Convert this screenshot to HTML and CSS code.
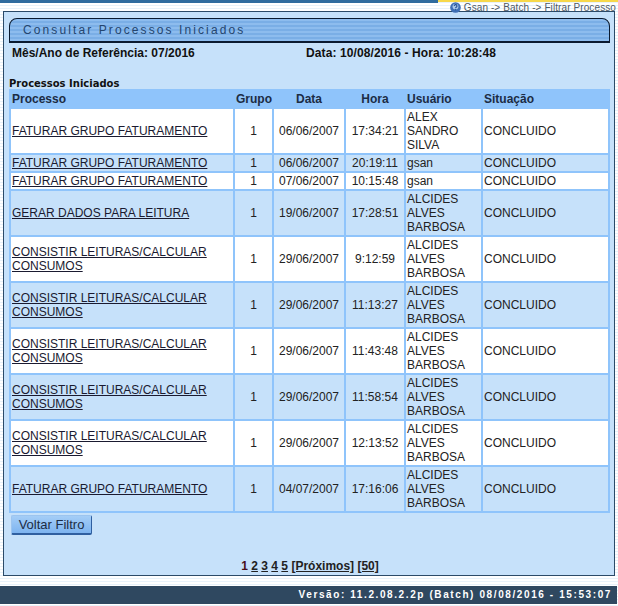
FILE: index.html
```html
<!DOCTYPE html>
<html lang="pt">
<head>
<meta charset="utf-8">
<title>Consultar Processos Iniciados</title>
<link rel="stylesheet" href="styles.css">
</head>
<body>
<div class="topbar"><div class="topbar-blue"></div><div class="topbar-yellow"></div></div>
<div class="crumb">
  <svg class="crumb-icon" width="11" height="11" viewBox="0 0 12 12"><circle cx="6" cy="6" r="5.8" fill="#3f6fb5"/><circle cx="6" cy="5" r="3.2" fill="#a9c8ea"/><path d="M4.6 4.4a1.5 1.5 0 1 1 2.2 1.3c-.5.3-.8.5-.8 1.1" fill="none" stroke="#234f94" stroke-width="1.2"/><rect x="5.4" y="7.8" width="1.2" height="1.2" fill="#234f94"/></svg>
  <span>Gsan -&gt; Batch -&gt; Filtrar Processo</span>
</div>
<main class="panel">
  <h1 class="title">Consultar Processos Iniciados</h1>
  <div class="info">
    <span class="info-ref">Mês/Ano de Referência: 07/2016</span>
    <span class="info-date">Data: 10/08/2016 - Hora: 10:28:48</span>
  </div>
  <div class="caption">Processos Iniciados</div>
  <table class="grid">
    <colgroup><col class="c1"><col class="c2"><col class="c3"><col class="c4"><col class="c5"><col class="c6"></colgroup>
    <thead><tr><th class="l">Processo</th><th>Grupo</th><th>Data</th><th>Hora</th><th class="l">Usuário</th><th class="l">Situação</th></tr></thead>
    <tbody>
      <tr><td><a href="#">FATURAR GRUPO FATURAMENTO</a></td><td class="m">1</td><td class="m">06/06/2007</td><td class="m">17:34:21</td><td>ALEX SANDRO SILVA</td><td>CONCLUIDO</td></tr>
      <tr class="alt"><td><a href="#">FATURAR GRUPO FATURAMENTO</a></td><td class="m">1</td><td class="m">06/06/2007</td><td class="m">20:19:11</td><td>gsan</td><td>CONCLUIDO</td></tr>
      <tr><td><a href="#">FATURAR GRUPO FATURAMENTO</a></td><td class="m">1</td><td class="m">07/06/2007</td><td class="m">10:15:48</td><td>gsan</td><td>CONCLUIDO</td></tr>
      <tr class="alt"><td><a href="#">GERAR DADOS PARA LEITURA</a></td><td class="m">1</td><td class="m">19/06/2007</td><td class="m">17:28:51</td><td>ALCIDES ALVES BARBOSA</td><td>CONCLUIDO</td></tr>
      <tr><td><a href="#">CONSISTIR LEITURAS/CALCULAR CONSUMOS</a></td><td class="m">1</td><td class="m">29/06/2007</td><td class="m">9:12:59</td><td>ALCIDES ALVES BARBOSA</td><td>CONCLUIDO</td></tr>
      <tr class="alt"><td><a href="#">CONSISTIR LEITURAS/CALCULAR CONSUMOS</a></td><td class="m">1</td><td class="m">29/06/2007</td><td class="m">11:13:27</td><td>ALCIDES ALVES BARBOSA</td><td>CONCLUIDO</td></tr>
      <tr><td><a href="#">CONSISTIR LEITURAS/CALCULAR CONSUMOS</a></td><td class="m">1</td><td class="m">29/06/2007</td><td class="m">11:43:48</td><td>ALCIDES ALVES BARBOSA</td><td>CONCLUIDO</td></tr>
      <tr class="alt"><td><a href="#">CONSISTIR LEITURAS/CALCULAR CONSUMOS</a></td><td class="m">1</td><td class="m">29/06/2007</td><td class="m">11:58:54</td><td>ALCIDES ALVES BARBOSA</td><td>CONCLUIDO</td></tr>
      <tr><td><a href="#">CONSISTIR LEITURAS/CALCULAR CONSUMOS</a></td><td class="m">1</td><td class="m">29/06/2007</td><td class="m">12:13:52</td><td>ALCIDES ALVES BARBOSA</td><td>CONCLUIDO</td></tr>
      <tr class="alt"><td><a href="#">FATURAR GRUPO FATURAMENTO</a></td><td class="m">1</td><td class="m">04/07/2007</td><td class="m">17:16:06</td><td>ALCIDES ALVES BARBOSA</td><td>CONCLUIDO</td></tr>
    </tbody>
  </table>
  <button class="back" type="button">Voltar Filtro</button>
  <nav class="pager"><b>1</b> <a href="#">2</a> <a href="#">3</a> <a href="#">4</a> <a href="#">5</a> <a href="#">[Próximos]</a> <a href="#">[50]</a></nav>
</main>
<footer class="footer">Versão: 11.2.08.2.2p (Batch) 08/08/2016 - 15:53:07</footer>
</body>
</html>
```
FILE: styles.css
```css
html, body { margin: 0; padding: 0; }
body {
  width: 618px;
  height: 606px;
  overflow: hidden;
  font-family: "Liberation Sans", Arial, sans-serif;
  font-size: 12px;
  color: #111;
  background: repeating-linear-gradient(to bottom, #ffffff 0, #ffffff 2px, #e8f2fa 2px, #e8f2fa 3px);
}
.topbar { display: flex; height: 3px; }
.topbar-blue { width: 438px; background: #2f6c9f; }
.topbar-yellow { flex: 1; height: 2px; background: #f7d84a; }
.crumb {
  height: 8px;
  display: flex;
  justify-content: flex-end;
  align-items: center;
  gap: 3px;
  padding-right: 2px;
  font-size: 10px;
  letter-spacing: 0.1px;
  color: #4f5a66;
}
.crumb-icon { flex: none; }
.panel {
  box-sizing: border-box;
  width: 612px;
  height: 565px;
  margin-left: 3px;
  padding: 6px 4px 0 5px;
  border: 1px solid #2b4a68;
  background: #c6e1fa;
}
.title {
  box-sizing: border-box;
  margin: 0;
  width: 601px;
  height: 25px;
  padding-left: 13px;
  border: 1px solid #0a1a30;
  border-bottom-width: 2px;
  border-radius: 8px 8px 0 0;
  font-size: 12px;
  font-weight: normal;
  line-height: 23px;
  letter-spacing: 2.1px;
  color: #24456e;
  background: repeating-linear-gradient(to bottom, #8dbcee 0, #8dbcee 2px, #7aaee6 2px, #7aaee6 4px);
}
.info {
  display: flex;
  padding: 3px 0 0 3px;
  height: 16px;
  line-height: 15px;
  font-weight: bold;
  color: #111;
}
.info-ref { width: 294px; }
.info-date { letter-spacing: 0.1px; }
.caption {
  margin: 16px 0 0;
  font: bold 10px/12px "DejaVu Sans", sans-serif;
  height: 11px;
}
.grid {
  table-layout: fixed;
  width: 601px;
  border-collapse: separate;
  border-spacing: 2px;
  background: #8fc4fb;
}
.c1 { width: 222px; } .c2 { width: 37px; } .c3 { width: 70px; }
.c4 { width: 58px; } .c5 { width: 75px; } .c6 { width: 125px; }
.grid th { padding: 1px; line-height: 14px; font-weight: bold; color: #1c2c44; text-align: center; }
.grid th.l { text-align: left; }
.grid td { padding: 1px; line-height: 14px; background: #fff; color: #222; }
.grid .alt td { background: #c6e1fa; }
.grid td.m { text-align: center; }
.grid a { color: #1a1a30; }
.back {
  display: block;
  box-sizing: border-box;
  width: 81px;
  height: 20px;
  margin: 2px 0 0 2px;
  padding: 0;
  border: 1px solid #9cc4ef;
  border-right-color: #2f5fa0;
  border-bottom: 2px solid #2f5fa0;
  border-radius: 2px;
  font: 13px "Liberation Sans", Arial, sans-serif;
  color: #1c2c44;
  background: linear-gradient(to bottom, #a4cdf7, #7db4f0);
}
.pager { margin-top: 24px; padding-left: 1px; text-align: center; font-weight: bold; line-height: 14px; color: #111; }
.pager a { color: #222; }
.pager b { color: #4a1018; }
.footer {
  box-sizing: border-box;
  width: 617px;
  height: 18px;
  margin-top: 10px;
  padding-right: 5px;
  font: bold 10px/18px "Liberation Sans", Arial, sans-serif;
  letter-spacing: 1.6px;
  text-align: right;
  color: #fff;
  background: #2f4860;
}
```
